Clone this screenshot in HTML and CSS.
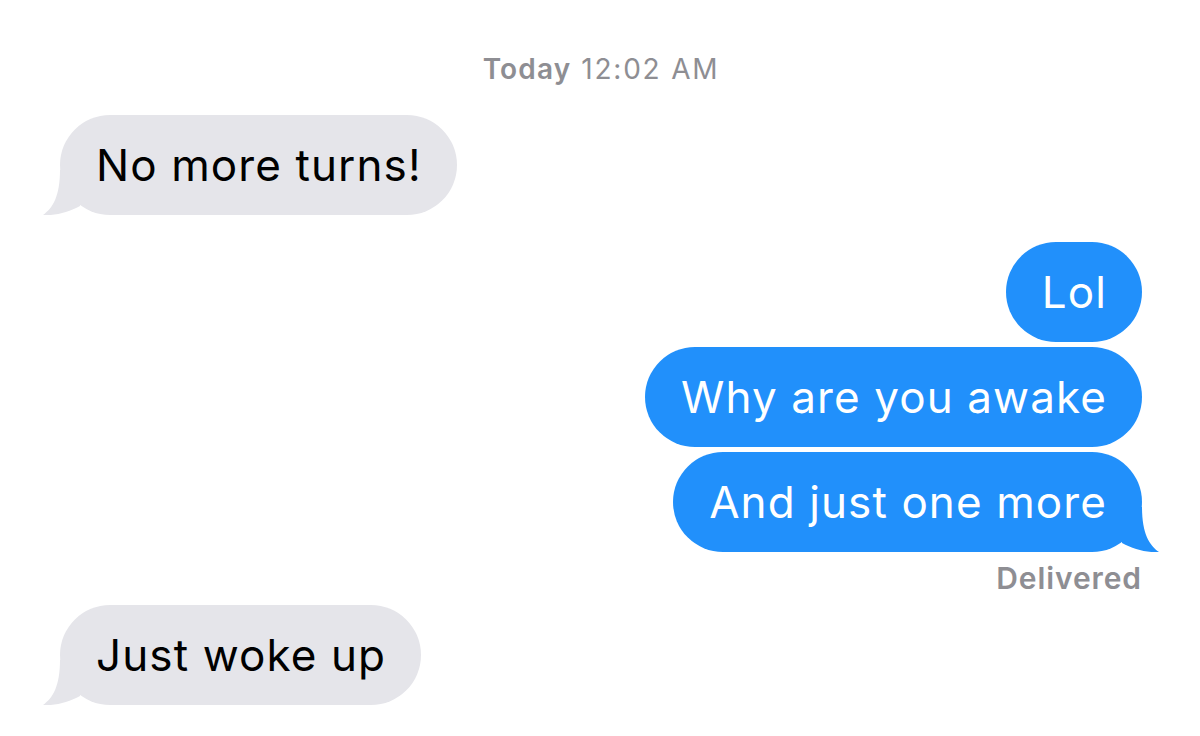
FILE: index.html
```html
<!DOCTYPE html>
<html>
<head>
<meta charset="utf-8">
<link rel="stylesheet" href="styles.css">
</head>
<body>
<div class="chat">
  <div class="time"><b>Today</b> 12:02 AM</div>

  <div class="bubble in first">
    <span>No more turns!</span>
    <svg class="tail" viewBox="0 0 40 45" width="40" height="45"><path d="M17 0 C17 26 10 38 0 45 C12 46 26 42 37 36 L37 0 Z"/></svg>
  </div>

  <div class="group out">
    <div class="bubble out">Lol</div>
    <div class="bubble out">Why are you awake</div>
    <div class="bubble out">
      <span>And just one more</span>
      <svg class="tail" viewBox="0 0 40 45" width="40" height="45"><path d="M17 0 C17 26 10 38 0 45 C12 46 26 42 37 36 L37 0 Z"/></svg>
    </div>
    <div class="status">Delivered</div>
  </div>

  <div class="bubble in">
    <span>Just woke up</span>
    <svg class="tail" viewBox="0 0 40 45" width="40" height="45"><path d="M17 0 C17 26 10 38 0 45 C12 46 26 42 37 36 L37 0 Z"/></svg>
  </div>
</div>
</body>
</html>
```

FILE: styles.css
```css
html, body {
  margin: 0;
  padding: 0;
  background: #ffffff;
}

body {
  width: 1200px;
  height: 736px;
  overflow: hidden;
  font-family: Inter, "Liberation Sans", sans-serif;
}

.chat {
  display: flex;
  flex-direction: column;
  padding: 0 58px 0 60px;
}

.time {
  margin-top: 54px;
  text-align: center;
  font-size: 28px;
  line-height: 30px;
  letter-spacing: 1.8px;
  color: #8e8e93;
}

.time b {
  font-weight: 600;
  letter-spacing: 1.2px;
}

.bubble {
  position: relative;
  height: 100px;
  line-height: 100px;
  padding: 0 35px 0 36px;
  border-radius: 50px;
  font-size: 44px;
  letter-spacing: 1.1px;
  white-space: nowrap;
  box-sizing: border-box;
}

.bubble.in {
  align-self: flex-start;
  background: #e5e5ea;
  color: #000000;
  fill: #e5e5ea;
}

.bubble.first {
  margin-top: 31px;
}

.group {
  display: flex;
  flex-direction: column;
  align-items: flex-end;
  gap: 5px;
  margin-top: 27px;
}

.bubble.out {
  background: #2190fb;
  color: #ffffff;
  fill: #2190fb;
}

.tail {
  position: absolute;
  bottom: 0;
  left: -17px;
}

.bubble.out .tail {
  left: auto;
  right: -17px;
  transform: scaleX(-1);
}

.status {
  margin-top: 6px;
  font-size: 30px;
  line-height: 30px;
  font-weight: 600;
  letter-spacing: 0.9px;
  color: #8e8e93;
}

.group + .bubble.in {
  margin-top: 12px;
}
```
